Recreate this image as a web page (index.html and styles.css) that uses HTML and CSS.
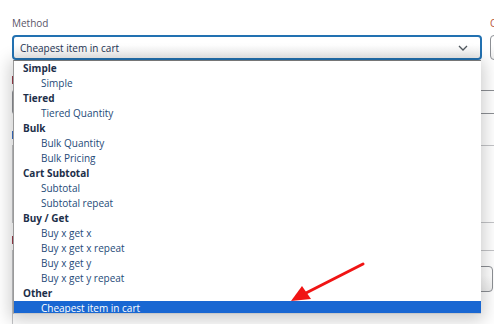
FILE: index.html
```html
<!DOCTYPE html>
<html>
<head>
<meta charset="utf-8">
<link rel="stylesheet" href="styles.css">
</head>
<body>
<div class="page">
  <div class="row-top">
    <div class="field method">
      <label class="lbl">Method</label>
      <div class="select focus">
        <span>Cheapest item in cart</span>
        <svg class="chev" width="10" height="6" viewBox="0 0 10 6"><path d="M1 1l4 4 4-4" fill="none" stroke="#50575e" stroke-width="1.3"/></svg>
      </div>
      <div class="popup">
        <div class="grp">Simple</div>
        <div class="opt">Simple</div>
        <div class="grp">Tiered</div>
        <div class="opt">Tiered Quantity</div>
        <div class="grp">Bulk</div>
        <div class="opt">Bulk Quantity</div>
        <div class="opt">Bulk Pricing</div>
        <div class="grp">Cart Subtotal</div>
        <div class="opt">Subtotal</div>
        <div class="opt">Subtotal repeat</div>
        <div class="grp">Buy / Get</div>
        <div class="opt">Buy x get x</div>
        <div class="opt">Buy x get x repeat</div>
        <div class="opt">Buy x get y</div>
        <div class="opt">Buy x get y repeat</div>
        <div class="grp">Other</div>
        <div class="opt sel">Cheapest item in cart</div>
      </div>
    </div>
    <div class="field cond">
      <label class="lbl orange">C</label>
      <div class="select small"></div>
    </div>
  </div>
  <div class="field f2">
    <span class="mark red"></span>
    <div class="input"></div>
  </div>
  <div class="field f3">
    <span class="mark blue"></span>
    <div class="box"></div>
  </div>
  <div class="field f4">
    <span class="mark red"></span>
    <div class="box2">
      <div class="select s2">
        <svg class="chev" width="10" height="6" viewBox="0 0 10 6"><path d="M1 1l4 4 4-4" fill="none" stroke="#50575e" stroke-width="1.3"/></svg>
      </div>
    </div>
  </div>
  <svg class="arrow" width="494" height="324" viewBox="0 0 494 324">
    <line x1="363" y1="264" x2="304" y2="294" stroke="#f01414" stroke-width="3" stroke-linecap="round"/>
    <polygon points="291,301 302,286 311,299" fill="#f01414"/>
  </svg>
</div>
</body>
</html>
```

FILE: styles.css
```css
* { box-sizing: border-box; }
html, body { margin: 0; padding: 0; background: #fff; }
body {
  width: 494px;
  height: 324px;
  overflow: hidden;
  font-family: "Open Sans", "DejaVu Sans", sans-serif;
  font-size: 10px;
}
.page {
  position: relative;
  padding: 15px 0 0 12px;
  width: 494px;
  height: 324px;
  overflow: hidden;
}
.row-top {
  display: flex;
  gap: 8px;
}
.field { position: relative; }
.method { width: 470px; flex: none; }
.cond { width: 60px; flex: none; }
.lbl {
  display: block;
  line-height: 16px;
  height: 16px;
  color: #5a5468;
  margin-bottom: 4px;
}
.orange { color: #b8553a; }
.mark {
  display: block;
  width: 2px;
  height: 8px;
  margin-top: 4px;
  margin-bottom: 4px;
}
.mark.red { background: #9b3c4b; }
.mark.blue { background: #3a6fc4; }
.select {
  height: 25px;
  border: 1px solid #8c8f94;
  border-radius: 4px;
  background: linear-gradient(#ffffff 35%, #eeeeee);
  display: flex;
  align-items: center;
  padding: 0 10px 0 7px;
  color: #1d3353;
}
.select.focus {
  border: 2px solid #2271b1;
  padding-left: 6px;
}
.select span { flex: 1; }
.chev { margin-right: 2px; }
.popup {
  position: absolute;
  left: 1px;
  top: 45px;
  width: 468px;
  height: 254px;
  overflow: hidden;
  background: #fff;
  border-top: 1px solid #767676;
  border-left: 1px solid #9a9a9a;
  border-bottom: 1px solid #c8c8c8;
  box-shadow: 0 3px 16px 3px rgba(0,0,0,0.2);
  z-index: 5;
}
.grp, .opt {
  height: 15px;
  line-height: 15px;
  white-space: nowrap;
}
.grp {
  padding-left: 9px;
  font-weight: bold;
  color: #1d2f4a;
}
.opt {
  padding-left: 27px;
  color: #254a78;
}
.opt.sel {
  background: #1967d2;
  color: #fff;
}
.f2 { margin-top: 16px; }
.f2 .mark { margin-bottom: 6px; }
.input {
  height: 24px;
  border: 1px solid #8c8f94;
  border-right: none;
  border-radius: 3px 0 0 3px;
}
.f3 { margin-top: 17px; }
.f3 .mark { margin-bottom: 6px; }
.box {
  height: 78px;
  border: 1px solid #c3c4c7;
  border-right: none;
}
.f4 { margin-top: 13px; }
.f4 .mark { margin-bottom: 6px; }
.box2 {
  height: 90px;
  border: 1px solid #c3c4c7;
  border-right: none;
  padding-top: 15px;
  display: flex;
  justify-content: flex-end;
}
.s2 {
  width: 101px;
  height: 26px;
  margin-right: 1px;
  justify-content: flex-end;
}
.arrow {
  position: absolute;
  left: 0;
  top: 0;
  z-index: 10;
  pointer-events: none;
}
```
